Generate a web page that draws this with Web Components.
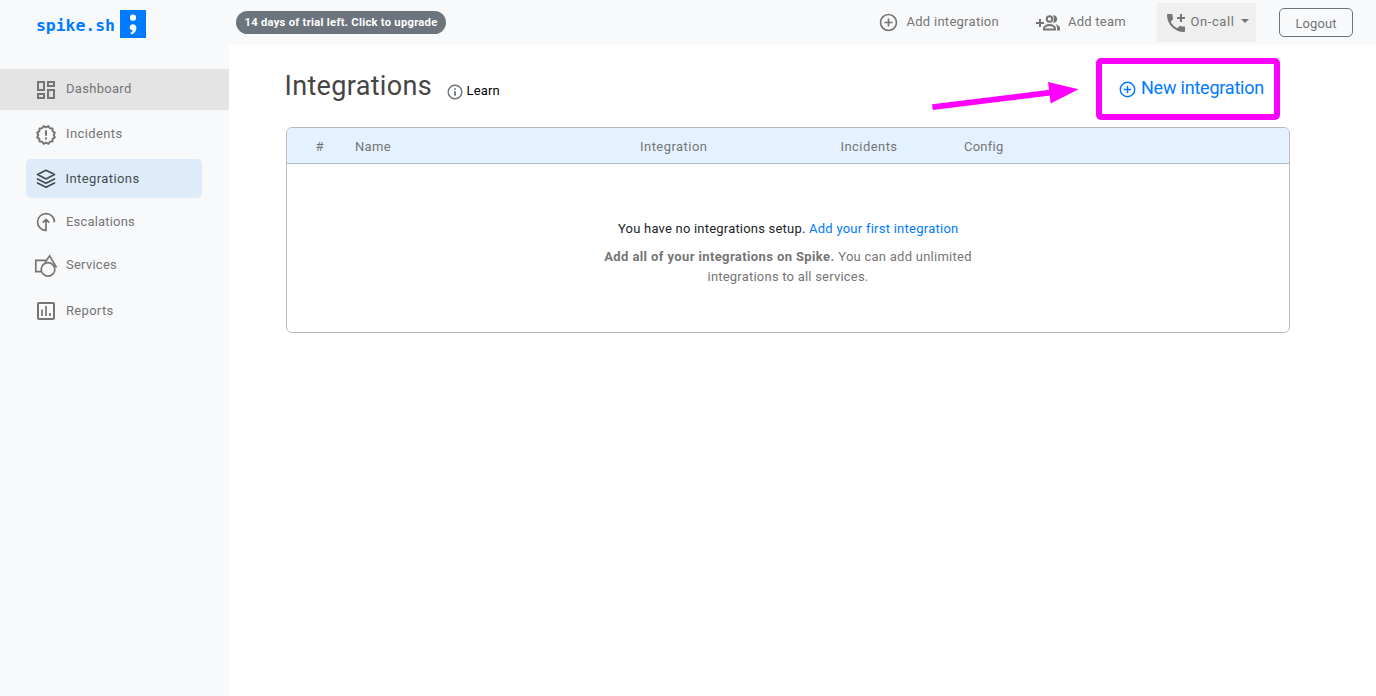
<!DOCTYPE html>
<html lang="en">
<head>
<meta charset="utf-8">
<title>Integrations</title>
<style>
body{margin:0;background:#fff;font:13px/20px Roboto,"Noto Sans",sans-serif;color:#757575}
</style>
</head>
<body>
<spike-app></spike-app>
<script>
const define=(name,html,setup)=>{
  const t=document.createElement('template');t.innerHTML=html;
  customElements.define(name,class extends HTMLElement{
    constructor(){super();this.attachShadow({mode:'open'}).append(t.content.cloneNode(true));}
    connectedCallback(){if(setup)setup(this,this.shadowRoot);}
  });
};

/* Text label tracked out to a given measure */
define('fit-text',`<style>:host{display:inline-block;white-space:pre;text-align:left;flex:none}</style><slot></slot>`,el=>{
  const w=+el.getAttribute('w');
  el.style.letterSpacing='0';
  const n=el.getBoundingClientRect().width;
  el.style.letterSpacing=((w-n)/Math.max(1,el.textContent.length)).toFixed(3)+'px';
  el.style.width=w+'px';
});

const seal=()=>{let p=[];for(let i=0;i<24;i++){const a=Math.PI*i/12,r=i%2?10:8.4;p.push((12+r*Math.sin(a)).toFixed(2)+','+(12-r*Math.cos(a)).toFixed(2));}return p.join(' ');};
const icons={
  dashboard:'<path fill="currentColor" d="M19 5v2h-4V5h4M9 5v6H5V5h4m10 8v6h-4v-6h4M9 17v2H5v-2h4M21 3h-8v6h8V3zM11 3H3v10h8V3zm10 8h-8v10h8V11zm-10 4H3v6h8v-6z"/>',
  incidents:`<g fill="none" stroke="currentColor" stroke-width="2.1" stroke-linejoin="round"><polygon points="${seal()}"/><path stroke-width="2.3" d="M12 6.800v6M12 14.800v2.200"/></g>`,
  layers:'<g fill="none" stroke="currentColor" stroke-width="1.7" stroke-linejoin="round" stroke-linecap="round"><path d="M12 3.2 20.5 7.6 12 12 3.5 7.6z"/><path d="M3.5 11.9 12 16.2l8.5-4.3M3.5 16 12 20.3l8.5-4.3"/></g>',
  escalate:'<g fill="none" stroke="currentColor" stroke-width="1.7"><path d="M20.4 12.2A8.4 8.4 0 1 0 12 20.4V9.4M8.7 12.7 12 9.4l3.3 3.3"/></g>',
  services:'<g fill="none" stroke="currentColor" stroke-width="1.7"><path d="M7.4 17.6H1.8V6.4h9.8M11.2 8.2 15.6 1.800 22 12.6h-2"/><circle cx="14" cy="15.4" r="6.8"/></g>',
  reports:'<rect x="4" y="4" width="16" height="16" rx="1" fill="none" stroke="currentColor" stroke-width="2"/><path stroke="currentColor" stroke-width="1.7" d="M8 17v-6.500M12 17V7M16 17v-3"/>',
  plus:'<g fill="none" stroke="currentColor" stroke-width="var(--stroke,1.8)"><circle cx="12" cy="12" r="9.1"/><path d="M12 7.400v9.200M7.400 12h9.200"/></g>',
  info:'<g fill="none" stroke="currentColor" stroke-width="1.9"><circle cx="12" cy="12" r="9.1"/><path stroke-width="2.4" d="M12 11v6M12 7v2"/></g>',
  team:'<g fill="none" stroke="currentColor" stroke-width="2"><path d="M0 12h8M4 8v8"/><circle cx="13.500" cy="8" r="2.800"/><path d="M8 18.500v-1.200c0-2 3-3.300 5.500-3.300s5.500 1.300 5.500 3.300v1.200z"/></g><path fill="currentColor" d="M17 4.200c2.300-.4 4.200 1.500 4.200 3.800s-1.900 4.200-4.200 3.800c1.200-2.300 1.200-5.300 0-7.600zM19.500 13.300c2.500.6 4.500 2 4.500 4v2.200h-3v-2.200c0-1.600-.5-2.900-1.500-4z"/>',
  phone:'<path fill="currentColor" d="M20 15.500c-1.250 0-2.450-.2-3.570-.57-.35-.11-.74-.03-1.020.24l-2.200 2.200c-2.830-1.440-5.150-3.750-6.590-6.580l2.200-2.210c.28-.27.36-.66.25-1.010C8.700 6.450 8.500 5.250 8.500 4c0-.55-.45-1-1-1H4c-.55 0-1 .45-1 1 0 9.390 7.610 17 17 17 .55 0 1-.45 1-1v-3.500c0-.55-.45-1-1-1zM21 6h-3V3h-2v3h-3v2h3v3h2V8h3V6z"/>'
};
define('ui-icon',`<style>:host{display:block;flex:none;width:var(--size,24px);height:var(--size,24px)}svg{display:block;width:100%;height:100%;overflow:visible}</style><svg viewBox="0 0 24 24" aria-hidden="true"></svg>`,(el,r)=>{
  r.querySelector('svg').innerHTML=icons[el.getAttribute('name')];
  if(el.hasAttribute('size'))el.style.setProperty('--size',el.getAttribute('size')+'px');
});

define('spike-logo',`<style>
:host{display:flex;align-items:center;gap:5px;padding:10px 0 0 36px;height:28px;color:#007bff;font:bold 16.500px/28px "DejaVu Sans Mono",monospace}
fit-text{margin-top:4px}svg{display:block;flex:none}
</style><fit-text w="79">spike.sh</fit-text><svg width="26" height="28" viewBox="0 0 26 28"><rect width="26" height="28" rx=".6" fill="#007bff"/><circle cx="13" cy="7.700" r="3.100" fill="#fff"/><path fill="#fff" d="M12.700 14.200c2.200 0 3.700 1.500 3.700 3.800 0 3.100-2 5.600-5 6.400l-1-1.600c1.500-.6 2.300-1.500 2.400-2.500-1.800.1-3.100-1.200-3.100-3 0-1.800 1.300-3.100 3-3.100z"/></svg>`);

define('nav-item',`<style>
:host{display:flex;align-items:center;height:var(--h);box-sizing:border-box}
.icon{display:flex;justify-content:center;width:24px;margin-left:34px}
.label{display:flex;margin:var(--dy,-2px) 0 0 8px}
:host([hovered]){background:#e4e4e4}
:host([active]){background:#deecf9;color:#454b50;border-radius:5px;margin:0 27px 0 26px}
:host([active]) .icon{margin-left:8px}
:host([active]) .label{margin-left:7.500px}
</style><span class="icon"><slot name="icon"></slot></span><span class="label"><slot></slot></span>`);

define('side-nav',`<style>
:host{display:block;background:#f8f9fb}
nav{padding-top:31px}
</style><spike-logo></spike-logo><nav>
<nav-item hovered style="--h:41px"><ui-icon slot="icon" name="dashboard"></ui-icon><fit-text w="65.5">Dashboard</fit-text></nav-item>
<nav-item style="--h:49px"><ui-icon slot="icon" name="incidents" size="22"></ui-icon><fit-text w="56.5">Incidents</fit-text></nav-item>
<nav-item active style="--h:39px;--dy:0px"><ui-icon slot="icon" name="layers" size="24"></ui-icon><fit-text w="74">Integrations</fit-text></nav-item>
<nav-item style="--h:48px;--dy:0px"><ui-icon slot="icon" name="escalate"></ui-icon><fit-text w="69">Escalations</fit-text></nav-item>
<nav-item style="--h:39px"><ui-icon slot="icon" name="services"></ui-icon><fit-text w="51">Services</fit-text></nav-item>
<nav-item style="--h:52px;--dy:0px"><ui-icon slot="icon" name="reports"></ui-icon><fit-text w="47.5">Reports</fit-text></nav-item>
</nav>`);

define('trial-badge',`<style>:host{display:flex;justify-content:center;width:210px;height:23px;border-radius:12px;background:#6c757d;color:#fff;font-size:11.200px;font-weight:700;line-height:24px}</style><slot></slot>`);

define('bar-action',`<style>:host{display:flex;align-items:center;height:45px}.l{display:flex;margin-top:-2px}ui-icon,slot[name]{display:block}</style><slot name="icon"></slot><span class="l"><slot></slot></span>`);

define('top-bar',`<style>
:host{display:flex;align-items:center;height:45px;background:#f8f9fb;padding:0 23px 0 7px}
.sp{flex:1}
.i1{margin-right:7.500px}.i2{margin-right:8px}
.call{display:flex;align-items:center;width:99px;height:39px;background:#efefef;margin:0 23px 0 31px;box-sizing:border-box;padding-left:7px}
.call fit-text{margin:-2px 6.500px 0 2.500px}
.caret{border:4px solid transparent;border-top-color:#757575;border-bottom:0;margin-top:-3px}
.out{box-sizing:border-box;width:74px;height:29px;border:1px solid #6c757d;border-radius:5px;display:flex;justify-content:center;line-height:29px}
</style>
<trial-badge><fit-text w="193">14 days of trial left. Click to upgrade</fit-text></trial-badge><span class="sp"></span>
<bar-action><ui-icon class="i1" slot="icon" name="plus" size="21" style="--stroke:1.9"></ui-icon><fit-text w="92.5">Add integration</fit-text></bar-action>
<bar-action style="margin-left:37px"><ui-icon class="i2" slot="icon" name="team" size="24"></ui-icon><fit-text w="58">Add team</fit-text></bar-action>
<div class="call"><ui-icon name="phone" size="24"></ui-icon><fit-text w="44">On-call</fit-text><span class="caret"></span></div>
<div class="out"><fit-text w="41">Logout</fit-text></div>`);

define('page-header',`<style>
:host{display:flex;height:82px;box-sizing:border-box;padding-top:13px}
h1{margin:13px 13.500px 0 -1.500px;height:30px;font-size:27px;line-height:30px;font-weight:400;color:#454545;display:flex}
.learn{display:flex;align-items:center;height:20px;margin-top:23px;color:#000;gap:3px}
.learn ui-icon{color:#6c757d;margin-top:1px}
.cta{box-sizing:border-box;width:184px;height:62px;margin:0 10px 0 auto;border:6px solid #f0f;border-radius:5px;display:flex;align-items:center;color:#007bff;font-size:18px;padding-left:16px;gap:4px}
.cta fit-text{margin-top:-2px}.cta ui-icon{margin-top:1px}
.arrow{position:absolute;left:928px;top:78px}
</style><h1><fit-text w="147.5">Integrations</fit-text></h1><div class="learn"><ui-icon name="info" size="18"></ui-icon><fit-text w="33.5">Learn</fit-text></div>
<div class="cta"><ui-icon name="plus" size="19" style="--stroke:1.8"></ui-icon><fit-text w="123">New integration</fit-text></div>
<svg class="arrow" width="154" height="36" viewBox="928 78 154 36"><path d="M932.400 107.200 1050 92.600" stroke="#f0f" stroke-width="5.800"/><path fill="#f0f" d="M1048 82 1078.500 89.200 1050.600 103.400z"/></svg>`);

define('integration-table',`<style>
:host{display:block;box-sizing:border-box;height:206px;border:1px solid #b8bbbe;border-radius:6px;overflow:hidden}
.head{display:grid;grid-template-columns:39.500px 285px 200.500px 123.500px 1fr;justify-items:start;padding-left:28.500px;height:35px;line-height:37px;background:#e4f2ff;border-bottom:1px solid #b8bbbe}
.empty{display:flex;flex-direction:column;align-items:center;padding-top:55px}
.row{display:flex;height:20px;line-height:20px}
.first{color:#212529;margin-bottom:8px}.first .link{color:#007bff}
b{font-weight:700}
</style><div class="head"><span>#</span><fit-text w="36">Name</fit-text><fit-text w="67.5">Integration</fit-text><fit-text w="57">Incidents</fit-text><fit-text w="39">Config</fit-text></div>
<div class="empty"><div class="row first"><fit-text w="191">You have no integrations setup. </fit-text><fit-text class="link" w="149">Add your first integration</fit-text></div>
<div class="row"><b><fit-text w="234">Add all of your integrations on Spike. </fit-text></b><fit-text w="133.500">You can add unlimited</fit-text></div>
<div class="row"><fit-text w="161">integrations to all services.</fit-text></div></div>`);

define('spike-app',`<style>
:host{display:grid;grid-template-columns:229px 1fr;grid-template-rows:45px 1fr;height:100vh;overflow:hidden}
side-nav{grid-row:1/3}main{padding:0 86px 0 57px}
</style><side-nav></side-nav><top-bar></top-bar><main><page-header></page-header><integration-table></integration-table></main>`);
</script>
</body>
</html>
